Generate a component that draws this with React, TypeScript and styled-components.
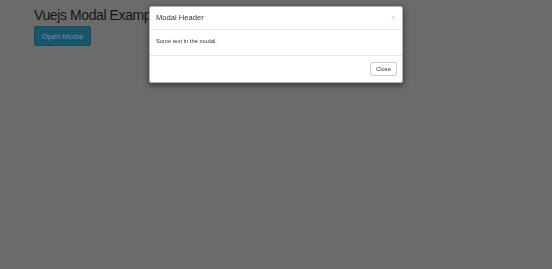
import React from "react";
import styled, { createGlobalStyle } from "styled-components";

const GlobalStyle = createGlobalStyle`
  html, body {
    margin: 0;
    padding: 0;
    height: 100%;
    background: #6b6b6b;
    font-family: "Liberation Sans", Arial, sans-serif;
  }
`;

export default function App() {
  return (
    <>
      <GlobalStyle />
      <Page>
        <Title>Vuejs Modal Example</Title>
        <OpenButton>Open Modal</OpenButton>
      </Page>
      <Modal>
        <Header>
          <ModalTitle>Modal Header</ModalTitle>
          <Dismiss>×</Dismiss>
        </Header>
        <Body>Some text in the modal.</Body>
        <Footer>
          <CloseButton>Close</CloseButton>
        </Footer>
      </Modal>
    </>
  );
}

const Page = styled.div`
  display: flex;
  flex-direction: column;
  align-items: flex-start;
  padding: 7px 0 0 34px;
`;

const Title = styled.h1`
  margin: 0 0 3px;
  font-size: 14px;
  line-height: 16px;
  font-weight: 400;
  letter-spacing: -0.4px;
  color: #151515;
`;

const OpenButton = styled.button`
  width: 57px;
  height: 20px;
  padding: 0;
  border: 1px solid #174a5d;
  border-radius: 2px;
  background: #1a5569;
  color: #6d91a1;
  font-family: inherit;
  font-size: 7.6px;
`;

const Modal = styled.div`
  position: fixed;
  top: 6px;
  left: 149px;
  width: 254px;
  box-sizing: border-box;
  background: #fff;
  border: 1px solid rgba(0, 0, 0, 0.3);
  border-radius: 2.5px;
  box-shadow: 0 2px 6px rgba(0, 0, 0, 0.5);
  color: #333;
`;

const Header = styled.div`
  display: flex;
  align-items: center;
  justify-content: space-between;
  height: 22px;
  padding: 0 7px 0 6px;
  border-bottom: 1px solid #e5e5e5;
`;

const ModalTitle = styled.h4`
  margin: 0;
  font-size: 7.6px;
  font-weight: 400;
  line-height: 10px;
`;

const Dismiss = styled.span`
  font-size: 7px;
  font-weight: 700;
  line-height: 8px;
  color: #000;
  opacity: 0.18;
`;

const Body = styled.div`
  padding: 6px 6px 8px;
  font-size: 5.8px;
  line-height: 11px;
`;

const Footer = styled.div`
  display: flex;
  justify-content: flex-end;
  padding: 6px 5px 6px;
  border-top: 1px solid #e5e5e5;
`;

const CloseButton = styled.button`
  width: 27px;
  height: 14px;
  padding: 0;
  border: 1px solid #ccc;
  border-radius: 2px;
  background: #fff;
  color: #333;
  font-family: inherit;
  font-size: 5.8px;
`;
